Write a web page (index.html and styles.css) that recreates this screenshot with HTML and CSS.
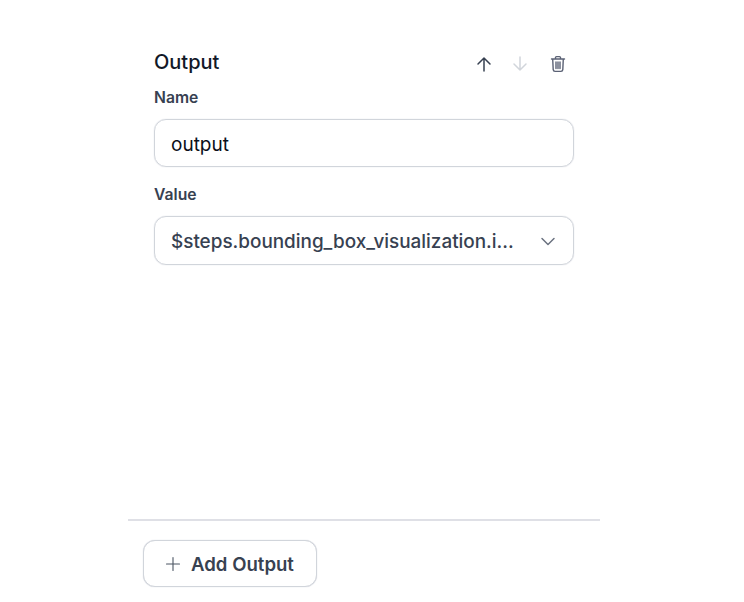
FILE: index.html
```html
<!DOCTYPE html>
<html lang="en">
<head>
  <meta charset="UTF-8" />
  <title>Outputs</title>
  <link rel="stylesheet" href="styles.css">
</head>
<body>
  <div class="panel">
    <div class="content">
      <div class="output-head">
        <h3>Output</h3>
        <div class="actions">
          <button class="icon-btn" type="button" aria-label="Move up">
            <svg width="20" height="20" viewBox="0 0 20 20" fill="none" stroke="#374151" stroke-width="1.5" stroke-linecap="round" stroke-linejoin="round"><path d="M10 17V4M4 10l6-6 6 6"/></svg>
          </button>
          <button class="icon-btn" type="button" aria-label="Move down">
            <svg width="20" height="20" viewBox="0 0 20 20" fill="none" stroke="#d1d5db" stroke-width="1.5" stroke-linecap="round" stroke-linejoin="round"><path d="M10 3v13M4 10l6 6 6-6"/></svg>
          </button>
          <button class="icon-btn trash" type="button" aria-label="Delete">
            <svg width="20" height="20" viewBox="0 0 20 20" fill="none" stroke="#5b6275" stroke-width="1.4" stroke-linecap="round" stroke-linejoin="round"><path d="M3.5 5h13M7.5 5V3.6c0-.6.4-1 1-1h3c.6 0 1 .4 1 1V5M4.7 5l.5 10.6c.1 1.1.8 1.8 1.8 1.8h6c1 0 1.7-.7 1.8-1.8L15.3 5M8 8v6.5M10 8v6.5M12 8v6.5"/></svg>
          </button>
        </div>
      </div>
      <label class="field-label">Name</label>
      <div class="input">output</div>
      <label class="field-label">Value</label>
      <div class="input select">
        <span class="select-text">$steps.bounding_box_visualization.i...</span>
        <svg width="20" height="20" viewBox="0 0 20 20" fill="none" stroke="#6b7280" stroke-width="1.5" stroke-linecap="round" stroke-linejoin="round"><path d="M4 7.5l6 6 6-6"/></svg>
      </div>
    </div>
    <div class="footer">
      <button class="add-btn" type="button">
        <svg width="20" height="20" viewBox="0 0 20 20" fill="none" stroke="#4b5563" stroke-width="1.1" stroke-linecap="round"><path d="M10 3.5v13M3.5 10h13"/></svg>
        Add Output
      </button>
    </div>
  </div>
</body>
</html>
```

FILE: styles.css
```css
* {
  box-sizing: border-box;
}

body {
  margin: 0;
  background: white;
  font-family: Inter, sans-serif;
}

.panel {
  width: 472px;
  height: 602px;
  margin-left: 128px;
  display: flex;
  flex-direction: column;
}

.content {
  flex: 1;
  padding: 48px 26px 0;
}

.output-head {
  display: flex;
  justify-content: space-between;
  height: 40px;
}

h3 {
  margin: 0;
  font-size: 20px;
  line-height: 28px;
  font-weight: 500;
  color: #111827;
}

.actions {
  display: flex;
  gap: 16px;
  padding: 6px 6.5px 0 0;
}

.icon-btn {
  width: 20px;
  height: 20px;
  padding: 0;
  border: none;
  background: none;
}

.trash {
  margin-left: 2px;
}

.field-label {
  display: block;
  margin-bottom: 11px;
  font-size: 15.7px;
  line-height: 20px;
  font-weight: 600;
  color: #374151;
}

.input {
  height: 48px;
  margin-bottom: 18px;
  padding: 2px 15px 0 16px;
  display: flex;
  align-items: center;
  border: 1px solid #d1d5db;
  border-radius: 12px;
  box-shadow: 0 0 1px #c4c7d2;
  font-size: 19px;
  color: #0b0f19;
}

.select {
  height: 49px;
  padding-top: 1px;
  justify-content: space-between;
  font-size: 18.9px;
  font-weight: 500;
  color: #374151;
}

.select-text {
  white-space: nowrap;
}

.footer {
  height: 83px;
  padding: 19px 15px 0;
  border-top: 2px solid #dfe0e6;
}

.add-btn {
  width: 174px;
  height: 47px;
  padding: 0 0 0 19px;
  display: flex;
  align-items: center;
  gap: 8px;
  background: white;
  border: 1px solid #d1d5db;
  border-radius: 12px;
  box-shadow: 0 0 1px #c4c7d2;
  font-family: inherit;
  font-size: 18.6px;
  font-weight: 600;
  color: #374151;
}
```
